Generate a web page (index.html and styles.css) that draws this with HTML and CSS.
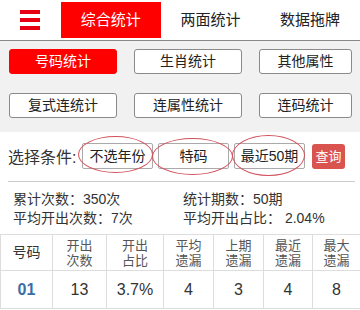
FILE: index.html
```html
<!DOCTYPE html>
<html lang="zh-CN">
<head>
<meta charset="UTF-8" />
<meta name="viewport" content="width=device-width, initial-scale=1" />
<title>综合统计</title>
<link rel="stylesheet" href="styles.css">
</head>
<body>

<div class="topbar">
  <div class="menu-icon"><span></span><span></span><span></span></div>
  <div class="tab active">综合统计</div>
  <div class="tab">两面统计</div>
  <div class="tab">数据拖牌</div>
</div>

<div class="types">
  <div class="type-btn active">号码统计</div>
  <div class="type-btn">生肖统计</div>
  <div class="type-btn">其他属性</div>
  <div class="type-btn">复式连统计</div>
  <div class="type-btn">连属性统计</div>
  <div class="type-btn">连码统计</div>
</div>

<div class="panel">
  <div class="filter">
    <span class="filter-label">选择条件:</span>
    <div class="pick mark1">不选年份</div>
    <div class="pick mark2">特码</div>
    <div class="pick mark3">最近50期</div>
    <div class="query">查询</div>
  </div>

  <div class="summary">
    <div>累计次数：350次</div>
    <div>统计期数：50期</div>
    <div>平均开出次数：7次</div>
    <div>平均开出占比： 2.04%</div>
  </div>

  <table class="stats">
    <colgroup>
      <col class="c1"><col class="c2"><col class="c3"><col class="c4"><col class="c5"><col class="c6"><col class="c7">
    </colgroup>
    <tr class="head">
      <th class="num-head">号码</th>
      <th>开出<br>次数</th>
      <th>开出<br>占比</th>
      <th>平均<br>遗漏</th>
      <th>上期<br>遗漏</th>
      <th>最近<br>遗漏</th>
      <th>最大<br>遗漏</th>
    </tr>
    <tr>
      <td class="num">01</td>
      <td>13</td>
      <td>3.7%</td>
      <td>4</td>
      <td>3</td>
      <td>4</td>
      <td>8</td>
    </tr>
  </table>
</div>

</body>
</html>
```

FILE: styles.css
```css
body {
  margin: 0;
  background: #fff;
  font-family: "Liberation Sans", "Noto Sans CJK SC", sans-serif;
  color: #222;
  overflow: hidden;
}
.topbar {
  display: flex;
  align-items: center;
  height: 40px;
  background: #fff;
  border-bottom: 1px solid #888;
}
.menu-icon {
  width: 61px;
  display: flex;
  flex-direction: column;
  align-items: center;
  gap: 4px;
}
.menu-icon span {
  display: block;
  width: 20px;
  height: 4px;
  background: #e60012;
}
.tab {
  width: 100px;
  height: 36px;
  line-height: 36px;
  text-align: center;
  font-size: 15px;
  color: #222;
}
.tab.active {
  background: #ff0000;
  color: #fff;
}
.types {
  display: grid;
  grid-template-columns: 108px 108px 93px;
  column-gap: 17px;
  row-gap: 19px;
  padding: 8px 9px 14px;
  background: #f1f1f1;
}
.type-btn {
  height: 23px;
  line-height: 23px;
  text-align: center;
  font-size: 14px;
  background: #fff;
  border: 1px solid #8a8a8a;
  border-radius: 3px;
}
.type-btn.active {
  background: #ff0000;
  border-color: #ff0000;
  color: #fff;
}
.panel {
  background: #fff;
}
.filter {
  display: flex;
  align-items: center;
  margin: 0 5px 0 8px;
  padding: 11px 0 12px;
  border-bottom: 1px solid #ccc;
}
.filter-label {
  font-size: 16px;
  color: #333;
  width: 74px;
}
.pick {
  position: relative;
  width: 69px;
  height: 24px;
  line-height: 24px;
  text-align: center;
  font-size: 14px;
  border: 1px solid #aaa;
  border-radius: 2px;
  margin-right: 5px;
}
.pick::after {
  content: "";
  position: absolute;
  border: 1px solid #d2505a;
  border-radius: 50%;
}
.mark1::after { top: -8px; bottom: -5px; left: -5px; right: -1px; }
.mark2::after { top: -6px; bottom: -7px; left: -7px; right: -5px; }
.mark3::after { top: -9px; bottom: -8px; left: -3px; right: -1px; }
.query {
  margin-left: 2px;
  width: 33px;
  height: 25px;
  line-height: 25px;
  text-align: center;
  font-size: 13px;
  color: #fff;
  background: #d9534f;
  border-radius: 3px;
}
.summary {
  display: grid;
  grid-template-columns: 170px 1fr;
  padding: 8px 0 6px 13px;
  font-size: 14px;
  line-height: 19px;
  color: #333;
}
.stats {
  width: 360px;
  table-layout: fixed;
  border-collapse: collapse;
}
.c1 { width: 52px; }
.c2 { width: 54px; }
.c3 { width: 57px; }
.c4 { width: 50px; }
.c5 { width: 50px; }
.c6 { width: 49px; }
.c7 { width: 48px; }
.stats th,
.stats td {
  border: 1px solid #ddd;
  text-align: center;
  padding: 0;
}
.stats th {
  height: 35px;
  font-size: 13px;
  font-weight: normal;
  line-height: 15px;
  color: #555;
}
.stats th.num-head {
  font-size: 14px;
  color: #333;
}
.stats td {
  height: 37px;
  font-size: 16px;
  color: #333;
}
.stats td.num {
  color: #3a6ea5;
  font-weight: bold;
}
```
